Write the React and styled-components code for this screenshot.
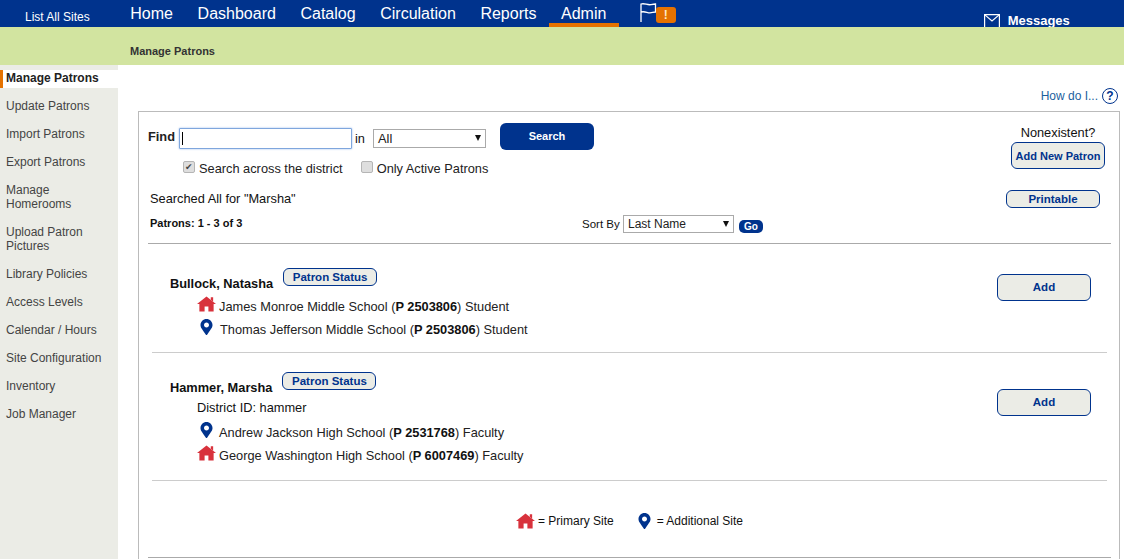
import React from 'react';
import styled, {createGlobalStyle} from 'styled-components';
import {FaMapMarkerAlt} from 'react-icons/fa';

const navItems = ['Home', 'Dashboard', 'Catalog', 'Circulation', 'Reports', 'Admin'];
const sideItems = [
    'Manage Patrons',
    'Update Patrons',
    'Import Patrons',
    'Export Patrons',
    'Manage Homerooms',
    'Upload Patron Pictures',
    'Library Policies',
    'Access Levels',
    'Calendar / Hours',
    'Site Configuration',
    'Inventory',
    'Job Manager',
];

const House = () => (
    <HouseSvg viewBox="0 0 20 16">
        <path d="M10 0 20 8h-2.500v8H12v-5.500H8V16H2.500V8H0z" />
        <path d="M14.500 1H17v4.500l-2.500-2z" />
    </HouseSvg>
);

const SiteLine = ({primary, school, barcode, role, indent}) => (
    <Site>
        <SiteIcon>{primary ? <House /> : <Pin />}</SiteIcon>
        <SiteText $indent={indent}>
            {school} (<b>P {barcode}</b>) {role}
        </SiteText>
    </Site>
);

const App = () => {
    return (
        <Page>
            <GlobalStyle />
            <Header>
                <ListSites>List All Sites</ListSites>
                <Nav>
                    {navItems.map((item) => (
                        <NavItem key={item} $active={item === 'Admin'}>{item}</NavItem>
                    ))}
                </Nav>
                <Alert>
                    <svg width="17" height="19" viewBox="0 0 17 19" fill="none" stroke="#fff" strokeWidth="1.3">
                        <path d="M1 19V1c4-1.200 6 1.400 10 .6 1.400-.3 3-.6 4.500-.6v8c-2 0-3.500.8-5.500.8C7 9.800 5 8 1 9" />
                    </svg>
                    <Badge>!</Badge>
                </Alert>
                <Messages>
                    <svg width="16" height="14" viewBox="0 0 16 14" fill="none" stroke="#fff" strokeWidth="1.2">
                        <path d="M.6.6h14.800v13H.6z" />
                        <path d="M.6.6 8 7 15.400.6" />
                    </svg>
                    <span>Messages</span>
                </Messages>
            </Header>
            <SubHeader>Manage Patrons</SubHeader>
            <Body>
                <Side>
                    {sideItems.map((item) => (
                        <SideItem key={item} $active={item === 'Manage Patrons'}>{item}</SideItem>
                    ))}
                </Side>
                <Main>
                    <HelpRow>
                        How do I...
                        <HelpIcon>?</HelpIcon>
                    </HelpRow>
                    <Panel>
                        <SearchArea>
                            <div>
                                <FindRow>
                                    <FindLabel>Find</FindLabel>
                                    <FindBox>
                                        <FindInput type="text" />
                                    </FindBox>
                                    <InLabel>in</InLabel>
                                    <Select $width={113} $height={19} $size={12.8} $top={3}>All</Select>
                                    <SearchButton>Search</SearchButton>
                                </FindRow>
                                <CheckRow>
                                    <Check>
                                        <CheckBox type="checkbox" defaultChecked />
                                        Search across the district
                                    </Check>
                                    <Check>
                                        <CheckBox type="checkbox" />
                                        Only Active Patrons
                                    </Check>
                                </CheckRow>
                            </div>
                            <NewPatron>
                                <span>Nonexistent?</span>
                                <OutlineButton $width={94} $height={27} $size={11}>Add New Patron</OutlineButton>
                            </NewPatron>
                        </SearchArea>
                        <ResultRow>
                            <SearchedText>Searched All for "Marsha"</SearchedText>
                            <OutlineButton $width={94} $height={18}>Printable</OutlineButton>
                        </ResultRow>
                        <SortRow>
                            <PageCount>Patrons: 1 - 3 of 3</PageCount>
                            <SortBox>
                                <SortLabel>Sort By</SortLabel>
                                <Select $width={111} $height={18} $size={12} $top={0}>Last Name</Select>
                                <GoButton>Go</GoButton>
                            </SortBox>
                        </SortRow>
                        <Rule />
                        <PatronRow $bottom={11}>
                            <div>
                                <NameLine>
                                    <Name>Bullock, Natasha</Name>
                                    <OutlineButton $width={94} $height={18}>Patron Status</OutlineButton>
                                </NameLine>
                                <SiteLine primary school="James Monroe Middle School" barcode="2503806" role="Student" />
                                <SiteLine school="Thomas Jefferson Middle School" barcode="2503806" role="Student" indent={1} />
                            </div>
                            <AddButton $top={6}>Add</AddButton>
                        </PatronRow>
                        <PatronRow $bottom={13}>
                            <div>
                                <NameLine>
                                    <Name>Hammer, Marsha</Name>
                                    <OutlineButton $width={94} $height={18}>Patron Status</OutlineButton>
                                </NameLine>
                                <District>District ID: hammer</District>
                                <SiteLine school="Andrew Jackson High School" barcode="2531768" role="Faculty" />
                                <SiteLine primary school="George Washington High School" barcode="6007469" role="Faculty" />
                            </div>
                            <AddButton $top={17}>Add</AddButton>
                        </PatronRow>
                        <Legend>
                            <LegendItem $gap={3}><House /> = Primary Site</LegendItem>
                            <LegendItem $gap={6}><Pin /> = Additional Site</LegendItem>
                        </Legend>
                        <Rule />
                    </Panel>
                </Main>
            </Body>
        </Page>
    );
};

export default App;

const GlobalStyle = createGlobalStyle`
    html, body {
        margin: 0;
        padding: 0;
        background: #fff;
    }
    body {
        font-family: "Liberation Sans", Arial, sans-serif;
        font-size: 12px;
        color: #111;
    }
`
const Page = styled.div`
    width: 1124px;
    height: 559px;
    overflow: hidden;
    display: flex;
    flex-direction: column;
`
const Header = styled.div`
    height: 27px;
    flex: none;
    background: #00338d;
    display: flex;
    overflow: hidden;
    color: #fff;
`
const ListSites = styled.div`
    width: 118px;
    padding: 10px 0 0 25px;
    box-sizing: border-box;
    font-size: 12px;
    line-height: 14px;
`
const Nav = styled.div`
    display: flex;
`
const NavItem = styled.div`
    padding: 4px 12.3px 0;
    font-size: 16px;
    line-height: 19px;
    border-bottom: 4px solid ${(props) => (props.$active ? '#e57200' : 'transparent')};
`
const Alert = styled.div`
    display: flex;
    align-items: flex-start;
    margin-left: 21px;
    padding-top: 3px;
`
const Badge = styled.div`
    width: 20px;
    height: 16px;
    margin: 4px 0 0 -1px;
    border-radius: 3px;
    background: #e57200;
    color: #ffe9c9;
    font-size: 12px;
    font-weight: bold;
    line-height: 16px;
    text-align: center;
`
const Messages = styled.div`
    display: flex;
    align-items: flex-start;
    gap: 8px;
    margin-left: 308px;
    padding-top: 14px;
    font-size: 13px;
    font-weight: bold;
    line-height: 13px;
`
const SubHeader = styled.div`
    height: 38px;
    flex: none;
    box-sizing: border-box;
    padding: 18px 0 0 130px;
    background: #d2e4a0;
    color: #333;
    font-size: 11px;
    font-weight: bold;
    line-height: 13px;
`
const Body = styled.div`
    flex: 1;
    display: flex;
    min-height: 0;
`
const Side = styled.div`
    width: 118px;
    flex: none;
    box-sizing: border-box;
    padding-top: 5px;
    background: #ebece6;
    display: flex;
    flex-direction: column;
    gap: 10px;
`
const SideItem = styled.div`
    padding: 1px 10px 3px ${(props) => (props.$active ? '3px' : '6px')};
    line-height: 14px;
    color: ${(props) => (props.$active ? '#222' : '#444')};
    font-weight: ${(props) => (props.$active ? 'bold' : 'normal')};
    background: ${(props) => (props.$active ? '#fff' : 'transparent')};
    border-left: ${(props) => (props.$active ? '3px solid #e57200' : 'none')};
`
const Main = styled.div`
    flex: 1;
    min-width: 0;
    padding: 0 4px 0 20px;
    display: flex;
    flex-direction: column;
`
const HelpRow = styled.div`
    height: 46px;
    flex: none;
    box-sizing: border-box;
    padding: 23px 2px 0 0;
    display: flex;
    justify-content: flex-end;
    align-items: flex-start;
    gap: 4px;
    color: #1c5f9e;
    line-height: 16px;
`
const HelpIcon = styled.span`
    width: 14px;
    height: 14px;
    border: 1.5px solid #00338d;
    border-radius: 50%;
    color: #00338d;
    font-size: 12px;
    font-weight: bold;
    line-height: 14px;
    text-align: center;
`
const Panel = styled.div`
    flex: 1;
    border: 1px solid #bbb;
    border-bottom: none;
    font-size: 12.8px;
`
const SearchArea = styled.div`
    display: flex;
    justify-content: space-between;
    padding: 11px 14px 0 9px;
`
const FindRow = styled.div`
    display: flex;
    align-items: center;
    height: 27px;
`
const FindLabel = styled.span`
    width: 31px;
    font-weight: bold;
    color: #222;
`
const FindBox = styled.div`
    position: relative;
    margin-top: 3px;
    &::after {
        content: '';
        position: absolute;
        left: 3px;
        top: 4px;
        width: 1px;
        height: 13px;
        background: #000;
    }
`
const FindInput = styled.input`
    display: block;
    width: 173px;
    height: 21px;
    box-sizing: border-box;
    padding: 0 3px;
    border: 1px solid #7fa6dd;
    border-radius: 1px;
    box-shadow: 0 0 2px #8db4ea;
    outline: none;
`
const InLabel = styled.span`
    width: 21px;
    margin-top: 3px;
    padding-left: 3px;
    box-sizing: border-box;
`
const Select = styled.div`
    position: relative;
    width: ${(props) => props.$width}px;
    height: ${(props) => props.$height}px;
    flex: none;
    box-sizing: border-box;
    padding-left: 4px;
    border: 1px solid #aaa;
    background: #fff;
    font-size: ${(props) => props.$size}px;
    line-height: ${(props) => props.$height - 2}px;
    color: #222;
    margin-top: ${(props) => props.$top}px;
    &::after {
        content: '';
        position: absolute;
        right: 4px;
        top: 5px;
        border-left: 3.5px solid transparent;
        border-right: 3.5px solid transparent;
        border-top: 6px solid #111;
    }
`
const SearchButton = styled.button`
    width: 94px;
    height: 27px;
    margin-left: 14px;
    padding: 0 0 2px;
    border: none;
    border-radius: 6px;
    background: #00338d;
    color: #fff;
    font-family: inherit;
    font-size: 11px;
    font-weight: bold;
`
const CheckRow = styled.div`
    display: flex;
    gap: 18px;
    margin: 11px 0 0 35px;
`
const Check = styled.label`
    display: flex;
    align-items: center;
    gap: 4px;
    line-height: 14px;
    color: #222;
`
const CheckBox = styled.input`
    appearance: none;
    position: relative;
    width: 12px;
    height: 12px;
    margin: 0 0 3px;
    border: 1px solid #b5b5b5;
    border-radius: 2px;
    background: #dedede;
    &:checked::after {
        content: '✔';
        position: absolute;
        left: 1px;
        top: -1px;
        font-family: "DejaVu Sans", sans-serif;
        font-size: 9px;
        line-height: 12px;
        color: #444;
    }
`
const NewPatron = styled.div`
    display: flex;
    flex-direction: column;
    align-items: center;
    gap: 1px;
    padding-top: 2px;
    line-height: 16px;
`
const OutlineButton = styled.button`
    width: ${(props) => props.$width}px;
    height: ${(props) => props.$height}px;
    flex: none;
    padding: 0;
    border: 1px solid #00338d;
    border-radius: 6px;
    background: #ebece6;
    color: #00338d;
    font-family: inherit;
    font-size: ${(props) => props.$size || 11.5}px;
    font-weight: bold;
    white-space: nowrap;
`
const ResultRow = styled.div`
    display: flex;
    justify-content: space-between;
    align-items: center;
    margin-top: 14px;
    padding: 0 19px 0 11px;
`
const SearchedText = styled.span`
    padding-bottom: 2px;
`
const SortRow = styled.div`
    display: flex;
    align-items: flex-start;
    margin-top: 7px;
    padding-left: 11px;
`
const PageCount = styled.div`
    width: 432px;
    font-size: 11px;
    font-weight: bold;
    line-height: 13px;
    margin-top: 2px;
`
const SortBox = styled.div`
    display: flex;
    align-items: flex-start;
    gap: 5px;
`
const SortLabel = styled.span`
    width: 36px;
    font-size: 11.5px;
    line-height: 13px;
    margin-top: 3px;
    white-space: nowrap;
`
const GoButton = styled.button`
    width: 24px;
    height: 13px;
    margin-top: 5px;
    padding: 0;
    border: none;
    border-radius: 5px;
    background: #00338d;
    color: #fff;
    font-family: inherit;
    font-size: 10px;
    font-weight: bold;
    line-height: 13px;
`
const Rule = styled.div`
    height: 1px;
    margin: 10px 8px 5px 9px;
    background: #aaa;
`
const PatronRow = styled.div`
    display: flex;
    justify-content: space-between;
    align-items: flex-start;
    margin: 0 12px 0 13px;
    padding: 19px 16px ${(props) => props.$bottom}px 18px;
    border-bottom: 1px solid #ccc;
`
const NameLine = styled.div`
    display: flex;
    align-items: flex-start;
    gap: 10px;
    height: 27px;
`
const Name = styled.div`
    margin-top: 8px;
    font-weight: bold;
    line-height: 16px;
`
const District = styled.div`
    height: 16px;
    margin: 1px 0 5px 27px;
    line-height: 16px;
`
const Site = styled.div`
    display: flex;
    align-items: center;
    height: 23px;
    padding-left: 27px;
`
const SiteIcon = styled.span`
    width: 19px;
    flex: none;
    display: flex;
    justify-content: center;
    margin-top: -5px;
`
const SiteText = styled.span`
    margin-left: ${(props) => 3 + (props.$indent || 0)}px;
    line-height: 16px;
    color: #222;
    b {
        color: #111;
    }
`
const HouseSvg = styled.svg`
    width: 19px;
    height: 16px;
    flex: none;
    fill: #d8323c;
`
const Pin = styled(FaMapMarkerAlt)`
    width: 13px;
    height: 16px;
    flex: none;
    color: #00338d;
`
const AddButton = styled.button`
    width: 94px;
    height: 27px;
    margin-top: ${(props) => props.$top}px;
    padding: 0 0 2px;
    border: 1px solid #00338d;
    border-radius: 6px;
    background: #ebece6;
    color: #00338d;
    font-family: inherit;
    font-size: 11.5px;
    font-weight: bold;
`
const Legend = styled.div`
    display: flex;
    justify-content: center;
    gap: 24px;
    height: 66px;
    padding: 32px 0 0 1px;
    box-sizing: border-box;
    font-size: 12px;
`
const LegendItem = styled.div`
    display: flex;
    align-items: center;
    gap: ${(props) => props.$gap}px;
    height: 16px;
    line-height: 16px;
`
